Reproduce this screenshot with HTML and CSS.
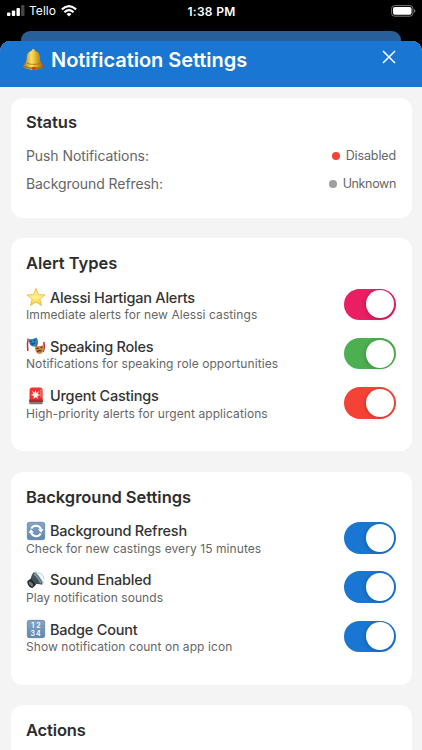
FILE: index.html
```html
<!DOCTYPE html>
<html lang="en">
<head>
<meta charset="utf-8">
<title>Notification Settings</title>
<link rel="stylesheet" href="styles.css">
</head>
<body>
<div class="statusbar">
  <div class="carrier">
    <svg class="signal" width="18" height="12" viewBox="0 0 18 12"><g fill="#fff"><rect x="0" y="7.500" width="3.400" height="3.500" rx=".9"/><rect x="4.800" y="5.500" width="3.400" height="5.500" rx=".9"/><rect x="9.500" y="2.900" width="3.400" height="8.100" rx=".9"/><rect x="14.100" y="0" width="3.400" height="11" rx=".9" opacity=".27"/></g></svg>
    <span class="tello">Tello</span>
    <svg class="wifi" width="16" height="12" viewBox="0 0 16 12"><g fill="none" stroke="#fff" stroke-width="2.100"><path d="M.9 4.400Q8-2 15.100 4.400"/><path d="M3.400 7.200Q8 3 12.600 7.200"/></g><path fill="#fff" d="M5.500 9Q8 6.800 10.500 9L8 11.600Z"/></svg>
  </div>
  <span class="clock">1:38 PM</span>
  <svg class="battery" width="25" height="12" viewBox="0 0 25 12"><rect x=".6" y=".6" width="21.300" height="10.600" rx="3" fill="none" stroke="#777"/><rect x="2" y="2" width="18.500" height="7.800" rx="1.800" fill="#fff"/><path d="M23 4q1.400.4 1.400 1.900T23 7.800Z" fill="#777"/></svg>
</div>
<div class="backsheet"></div>
<main class="sheet">
  <header class="header">
    <svg class="bell" width="23" height="23" viewBox="0 0 23 23"><defs><linearGradient id="gold"><stop stop-color="#a8750b"/><stop offset=".4" stop-color="#ffe062"/><stop offset=".7" stop-color="#d09a1a"/><stop offset="1" stop-color="#8b5c08"/></linearGradient></defs><path d="M11.300 1.100c-1.300 0-1.600 1-1.600 1.900-3.500.8-4.700 3-4.900 6.300-.2 4-.8 6-3.800 8.700-.6 1 1.600 2.500 7 3.400 5.300.7 12.300-.2 14.200-2.600.6-.9-2.700-2.200-3.700-5.200-.7-2.400-.1-4.100-1-6.600-.7-2.200-2.300-3.600-4.500-4C13 2 12.600 1.100 11.300 1.100Z" fill="url(#gold)"/><path d="M1.200 17.800q9.300 3 20.800.8-5 3.200-12.300 2.600-6.500-.6-8.500-3.400" fill="#845411" opacity=".65"/><ellipse cx="12" cy="20.300" rx="2.500" ry="1.600" fill="#c94513"/><path d="M4.500 15q5.500 2.500 13.500.6" fill="none" stroke="#a26d0b" stroke-width=".8"/></svg>
    <h1 class="title">Notification Settings</h1>
    <svg class="close" width="14" height="14" viewBox="0 0 14 14"><path d="M1 1 13 13M13 1 1 13" stroke="#fff" stroke-width="1.500" fill="none"/></svg>
  </header>
  <div class="cards">
    <section class="card status">
      <h2 class="heading">Status</h2>
      <div class="stat"><span class="key">Push Notifications:</span><span class="value"><i class="dot red"></i><span class="disabled">Disabled</span></span></div>
      <div class="stat"><span class="key">Background Refresh:</span><span class="value"><i class="dot grey"></i><span class="unknown">Unknown</span></span></div>
    </section>
    <section class="card group">
      <h2 class="heading">Alert Types</h2>
      <div class="row"><div class="copy"><div class="label">
        <svg class="icon" width="20" height="20" viewBox="0 0 20 20"><defs><linearGradient id="star" x2="0" y2="1"><stop stop-color="#ffe84e"/><stop offset=".55" stop-color="#fff08b"/><stop offset="1" stop-color="#ffc51e"/></linearGradient></defs><path d="m10 1.500 2.400 6.100 6.600.4-5.100 4.200 1.700 6.400L10 15l-5.600 3.600 1.700-6.400L1 8l6.600-.4Z" fill="url(#star)" stroke="#efb13d" stroke-width=".8" stroke-linejoin="round"/></svg>
        <span>Alessi Hartigan Alerts</span></div><div class="sub">Immediate alerts for new Alessi castings</div></div><span class="toggle pink"></span></div>
      <div class="row"><div class="copy"><div class="label">
        <svg class="icon" width="20" height="20" viewBox="0 0 20 20"><path d="M2.200 2.500Q.8 8 1.800 15M10.500 3q1.500 3-.5 8M17.700 6q1.500 5-.7 10" stroke="#c72e36" stroke-width="1.500" fill="none"/><path d="M2.500 3q4 .7 8.300-1.500 1.500 6.200-1.400 8.700C6 11.500 3 9 2.500 3Z" fill="#2986bf"/><path d="M3.800 5.400 5.800 5M8 4.600l1.700-.8M4.800 7.500q2.300 1.500 4.300-.9" stroke="#123f6f" stroke-width="1.100" fill="none"/><path d="M9 10q4.500.8 8.700-1.300 1.100 6.200-2.200 8.800c-4 1.800-7-1.700-6.500-7.500Z" fill="#c98a45"/><path d="M10.500 12.300l2.200.1M14.700 11.800l1.600-.7M11.200 15.700q2-2 4.300-.6" stroke="#4e2918" stroke-width="1.200" fill="none"/></svg>
        <span>Speaking Roles</span></div><div class="sub">Notifications for speaking role opportunities</div></div><span class="toggle green"></span></div>
      <div class="row"><div class="copy"><div class="label">
        <svg class="icon" width="20" height="20" viewBox="0 0 20 20"><path d="M3.500 14.500h13l.3 2.300q.2 1.500-1.600 1.500H4.800q-1.800 0-1.600-1.500Z" fill="#85767c"/><path d="M3.600 4q0-2.500 2.600-2.500h7.800q2.600 0 2.600 2.500l.2 12H3.400Z" fill="#ec3532"/><path d="M3.400 13.500h13.400V16H3.400Z" fill="#b3262a"/><path d="m9.700 4 .6 3 3-2-1.700 3.100 2.900.9-3.200.9.800 3-2.400-2-2.200 2 .3-3.100-2.900-.7 2.600-1.300L6 5l2.700 1.500Z" fill="#fff2ec"/><path d="M14.900 3v8" stroke="#ff8780"/></svg>
        <span>Urgent Castings</span></div><div class="sub">High-priority alerts for urgent applications</div></div><span class="toggle orange"></span></div>
    </section>
    <section class="card group">
      <h2 class="heading">Background Settings</h2>
      <div class="row"><div class="copy"><div class="label">
        <svg class="icon" width="20" height="20" viewBox="0 0 20 20"><defs><linearGradient id="tile" x2="0" y2="1"><stop stop-color="#86a5c4"/><stop offset="1" stop-color="#6087ae"/></linearGradient></defs><rect x="1.300" y="1.300" width="17.400" height="17.400" rx="2" fill="url(#tile)" stroke="#587ba1" stroke-width=".7"/><path d="M5.300 7.600A5.300 5.300 0 0 1 15 8.500M14.700 12.400A5.300 5.300 0 0 1 5 11.500" fill="none" stroke="#fff" stroke-width="2"/><path d="M17.500 8 15.200 11.700 12 8.600ZM2.500 12l2.300-3.700L8 11.400Z" fill="#fff"/></svg>
        <span>Background Refresh</span></div><div class="sub">Check for new castings every 15 minutes</div></div><span class="toggle blue"></span></div>
      <div class="row"><div class="copy"><div class="label">
        <svg class="icon" width="20" height="20" viewBox="0 0 20 20"><path d="M7.200 2.500 10 1.300l8 11.200-2.300 2.200Z" fill="#a8bfc8"/><path d="M7.500 2.500C5.500 5 5 7 4.700 9l4 5.500c2.800-.7 5-.3 7.500.2 1-2.500-5.500-12-8.700-12.200Z" fill="#3e535d"/><path d="M8 4c2.500 1.500 6 6.500 6.700 9.200" stroke="#849ca7" stroke-width="1.500" fill="none"/><path d="M1.500 11 5 8.500l5 6.200-3.500 3.200c-3 .3-6-4.300-5-6.900Z" fill="#25292d"/><ellipse cx="5" cy="14" rx="1.500" ry="3" transform="rotate(-38 5 14)" fill="#70777a"/><path d="M12 2.700q5 1.300 6.300 6.500" stroke="#b9dce4" stroke-width="1.200" fill="none"/></svg>
        <span>Sound Enabled</span></div><div class="sub">Play notification sounds</div></div><span class="toggle blue"></span></div>
      <div class="row"><div class="copy"><div class="label">
        <svg class="icon" width="20" height="20" viewBox="0 0 20 20"><rect x="1.300" y="1.300" width="17.400" height="17.400" rx="2" fill="url(#tile)" stroke="#587ba1" stroke-width=".7"/><g class="digits"><text x="5.200" y="9">1</text><text x="10.200" y="9">2</text><text x="4.400" y="16.500">3</text><text x="10" y="16.500">4</text></g></svg>
        <span>Badge Count</span></div><div class="sub">Show notification count on app icon</div></div><span class="toggle blue"></span></div>
    </section>
    <section class="card last"><h2 class="heading actions">Actions</h2></section>
  </div>
</main>
</body>
</html>
```
FILE: styles.css
```css
* { box-sizing: border-box; }
body { margin: 0; width: 422px; height: 750px; overflow: hidden; background: #000; font-family: Inter, "Liberation Sans", sans-serif; display: flex; flex-direction: column; }
svg { display: block; flex: none; }
.statusbar { height: 31px; flex: none; display: grid; grid-template-columns: 1fr auto 1fr; align-items: start; color: #fff; padding: 4.500px 6px 0 7px; }
.carrier { display: flex; align-items: center; height: 12px; }
.tello { font-size: 12px; margin-left: 4px; letter-spacing: .05px; line-height: 12px; }
.wifi { margin-left: 5px; }
.clock { font-size: 12px; font-weight: 600; line-height: 13px; letter-spacing: .3px; }
.battery { justify-self: end; }
.backsheet { height: 10px; flex: none; margin: 0 21px; border-radius: 9px 9px 0 0; background: #285f98; }
.sheet { flex: 1; min-height: 0; background: #f4f4f4; border-radius: 10px 10px 0 0; overflow: hidden; }
.header { height: 46px; background: #1976d2; display: flex; align-items: flex-start; padding: 7px 26px 0 22px; }
.title { margin: 0 auto 0 6px; color: #fff; font-size: 20px; line-height: 25px; font-weight: 600; letter-spacing: -.05px; white-space: nowrap; }
.close { margin-top: 2px; }
.cards { padding: 10.500px 10.500px 0; display: flex; flex-direction: column; gap: 20.500px; }
.card { background: #fff; border-radius: 12px; padding: 15px 15.500px 0; flex: none; }
.status { height: 120px; padding-top: 14px; }
.group { height: 213px; }
.last { height: 100px; }
.heading { margin: 0; font-size: 16.500px; line-height: 21px; color: #2d2d2d; font-weight: 600; letter-spacing: -.03px; }
.actions { letter-spacing: -.15px; }
.status .heading { margin-bottom: 9.500px; }
.stat { height: 27.700px; display: flex; align-items: center; justify-content: space-between; color: #666; font-size: 14px; letter-spacing: -.08px; }
.value { display: flex; align-items: center; font-size: 12.500px; gap: 6px; }
.disabled { letter-spacing: -.12px; }
.unknown { letter-spacing: -.35px; }
.dot { width: 8px; height: 8px; border-radius: 50%; }
.red { background: #f44336; }
.grey { background: #9e9e9e; }
.group .heading { margin-bottom: 12.500px; }
.row { height: 49.250px; display: flex; justify-content: space-between; align-items: flex-start; }
.copy { padding-top: .6px; }
.label { display: flex; align-items: center; gap: 4px; height: 20px; color: #333; font-size: 14.500px; font-weight: 500; letter-spacing: -.22px; white-space: nowrap; }
.sub { color: #666; font-size: 12px; line-height: 15.500px; letter-spacing: .075px; white-space: nowrap; }
.toggle { width: 52px; height: 31.500px; border-radius: 16px; display: flex; justify-content: flex-end; padding: 1.800px; margin-top: 2px; }
.toggle::before { content: ""; width: 28px; height: 28px; border-radius: 50%; background: #fff; box-shadow: -1px 1px 4px rgba(0,0,0,.18); }
.pink { background: #e91e63; }
.green { background: #4caf50; }
.orange { background: #f44336; }
.blue { background: #1976d2; }
.digits { fill: #fff; font: 600 7px Inter, sans-serif; letter-spacing: 0; }
```
